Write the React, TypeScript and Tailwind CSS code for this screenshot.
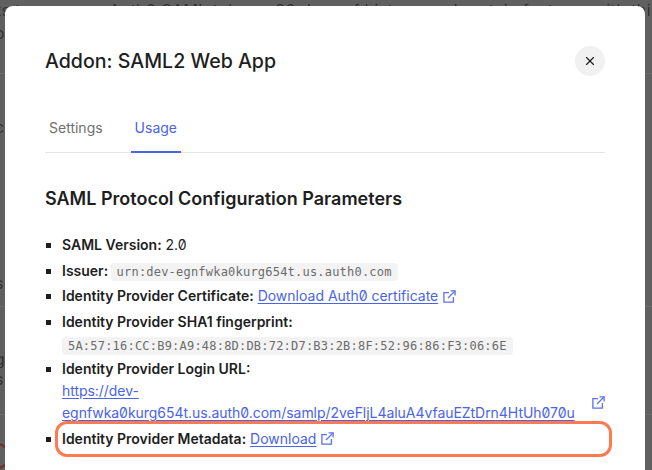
import { X } from "lucide-react";

const linkClass = "text-[#4a63e7] underline underline-offset-2";
const chipClass =
  "rounded-[4px] bg-[#f3f3f3] px-[6px] py-[2px] font-['DejaVu_Sans_Mono',monospace] text-[12px] leading-4 font-normal tracking-[0.21px] text-[#6b6b6b]";
const sliverClass = "ml-[-5px] block text-[16px] leading-[20px]";

function LinkIcon() {
  return (
    <svg viewBox="0 0 13 13" className="size-[13px] shrink-0" fill="none" stroke="#5a72ea" strokeWidth="1.3">
      <path d="M6 2.6H0.9v9.5h9.5V7" />
      <path d="M5 8 12 1" />
      <path d="M7.6 0.9h4.5v4.5" />
    </svg>
  );
}

export default function App() {
  return (
    <div className="relative h-[470px] w-[652px] overflow-hidden bg-[#606060] font-['Inter',sans-serif] [font-feature-settings:'zero']">
      {/* page behind the overlay, only its edges show */}
      <div className="flex h-full flex-col text-[#303030] blur-[0.6px]">
        <div className="h-[74px] border-b border-[#6b6b6b]">
          <div className="flex h-[20px] items-start justify-between">
            <span className="ml-[-4px] whitespace-nowrap text-[16px] leading-[20px] tracking-[0.4px]">
              ts to use your Auth0 SAML tokens, 30 days of history, and certain features with this
            </span>
            <span className="text-[16px] leading-[20px] text-[#25346f]">t</span>
          </div>
          <span className={`${sliverClass} mt-[3px]`}>o</span>
        </div>
        <div className="h-[233px] border-b border-[#6b6b6b]">
          <span className={`${sliverClass} mt-[43px]`}>c</span>
        </div>
        <div className="h-[108px] border-b border-[#6b6b6b]">
          <span className={`${sliverClass} mt-[-34px]`}>s</span>
          <span className={`${sliverClass} mt-[56px]`}>g</span>
          <span className={sliverClass}>s</span>
        </div>
        <div className="ml-[-16px] mt-[28px] size-[26px] rounded-full border-2 border-[#7c2a2a]" />
      </div>

      {/* modal */}
      <div className="absolute left-[5px] top-[6px] h-[500px] w-[640px] rounded-lg bg-white px-10 pt-10 text-[#1e1e1e]">
        <div className="flex h-[30px] items-center justify-between">
          <h2 className="text-[19.6px] leading-[28px] font-medium">Addon: SAML2 Web App</h2>
          <button className="flex size-[30px] items-center justify-center rounded-full bg-[#f1f1f1]">
            <X className="size-[14px] text-[#1e1e1e]" strokeWidth={2} />
          </button>
        </div>

        <div className="mt-[40px] flex h-[37px] gap-6 border-b border-[#e5e5e5] text-[14px]">
          <div className="h-[37px] px-1 pt-[1px] text-[#6f6f6f]">Settings</div>
          <div className="h-[37px] border-b-2 border-[#4a63e7] px-1 pt-[1px] text-[#4a63e7]">Usage</div>
        </div>

        <h3 className="mt-[33px] text-[18px] leading-[26px] font-semibold">SAML Protocol Configuration Parameters</h3>

        <ul className="mt-[22px] list-[square] space-y-[3.5px] pl-[17px] text-[14px] leading-[22px] marker:text-[#1e1e1e]">
          <li>
            <strong className="font-semibold">SAML Version:</strong> 2.0
          </li>
          <li>
            <strong className="font-semibold">Issuer:</strong>{" "}
            <code className={`${chipClass} ml-[-1.5px]`}>urn:dev-egnfwka0kurg654t.us.auth0.com</code>
          </li>
          <li>
            <strong className="font-semibold">Identity Provider Certificate:</strong>{" "}
            <span className="inline-flex items-center gap-[5px]">
              <a className={linkClass}>Download Auth0 certificate</a>
              <LinkIcon />
            </span>
          </li>
          <li>
            <strong className="font-semibold">Identity Provider SHA1 fingerprint:</strong>
            <div className="mt-[2px] leading-[20px]">
              <code className={chipClass}>5A:57:16:CC:B9:A9:48:8D:DB:72:D7:B3:2B:8F:52:96:86:F3:06:6E</code>
            </div>
          </li>
          <li>
            <strong className="font-semibold">Identity Provider Login URL:</strong>
            <div className="flex items-center justify-between">
              <a className={`${linkClass} w-[520px] break-words tracking-[-0.045px]`}>
                https://dev-egnfwka0kurg654t.us.auth0.com/samlp/2veFljL4aluA4vfauEZtDrn4HtUh070u
              </a>
              <LinkIcon />
            </div>
          </li>
          <li className="relative !mt-[3px]">
            <strong className="font-semibold">Identity Provider Metadata:</strong>{" "}
            <span className="inline-flex items-center gap-[5px]">
              <a className={linkClass}>Download</a>
              <LinkIcon />
            </span>
            <div className="absolute left-[-7px] top-[-6.5px] h-[36px] w-[557px] rounded-[12px] border-[3px] border-[#ff7a50]" />
          </li>
        </ul>
      </div>
    </div>
  );
}
